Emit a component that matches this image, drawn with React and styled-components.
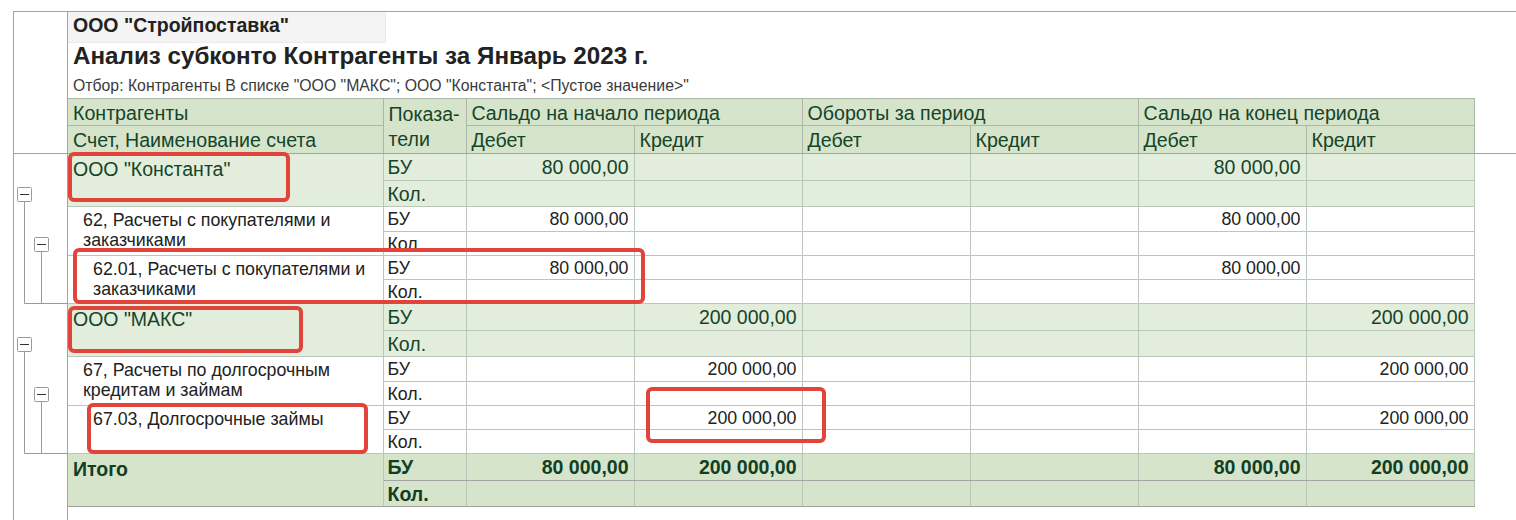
import React from "react";
import styled, { createGlobalStyle } from "styled-components";

const GlobalStyle = createGlobalStyle`
    * {
        box-sizing: border-box;
    }
    html, body {
        margin: 0;
        padding: 0;
        background: #ffffff;
        font-family: "Liberation Sans", Arial, sans-serif;
        overflow: hidden;
    }
`;

const COLS = [315, 83, 168, 168, 168, 168, 168, 168];

const rows = [
    { kind: "group", level: 0, name: 'ООО "Константа"', bu: ["80 000,00", "", "", "", "80 000,00", ""] },
    { kind: "detail", level: 1, name: "62, Расчеты с покупателями и заказчиками", bu: ["80 000,00", "", "", "", "80 000,00", ""] },
    { kind: "detail", level: 2, name: "62.01, Расчеты с покупателями и заказчиками", bu: ["80 000,00", "", "", "", "80 000,00", ""] },
    { kind: "group", level: 0, name: 'ООО "МАКС"', bu: ["", "200 000,00", "", "", "", "200 000,00"] },
    { kind: "detail", level: 1, name: "67, Расчеты по долгосрочным кредитам и займам", bu: ["", "200 000,00", "", "", "", "200 000,00"] },
    { kind: "detail", level: 2, name: "67.03, Долгосрочные займы", bu: ["", "200 000,00", "", "", "", "200 000,00"] },
    { kind: "total", level: 0, name: "Итого", bu: ["80 000,00", "200 000,00", "", "", "80 000,00", "200 000,00"] },
];

// red annotation frames drawn over the report
const marks = [
    { x: 68, y: 152, w: 222, h: 50 },
    { x: 73, y: 248, w: 572, h: 56 },
    { x: 68, y: 306, w: 235, h: 47 },
    { x: 87, y: 403, w: 281, h: 51 },
    { x: 646, y: 387, w: 180, h: 56 },
];

const heightsFor = (row) => {
    if (row.kind !== "detail") return [27, 26];
    return row.level === 1 ? [25, 24] : [24, 24];
};

const Cols = () => (
    <colgroup>
        {COLS.map((w, i) => (
            <col key={i} style={{ width: w }} />
        ))}
    </colgroup>
);

const TreeMarks = () => {
    const group = (top) => (
        <g key={top}>
            <line x1='10.5' y1={top + 14} x2='10.5' y2={top + 116.5} stroke='#9a9a9a' />
            <line x1='10.5' y1={top + 116.5} x2='53' y2={top + 116.5} stroke='#9a9a9a' />
            <line x1='27.5' y1={top + 64} x2='27.5' y2={top + 116.5} stroke='#9a9a9a' />
            <rect x='3.5' y={top + 0.5} width='14' height='14' fill='#fff' stroke='#9a9a9a' rx='1' />
            <line x1='6' y1={top + 7.5} x2='15' y2={top + 7.5} stroke='#333' />
            <rect x='20.5' y={top + 50.5} width='14' height='14' fill='#fff' stroke='#9a9a9a' rx='1' />
            <line x1='23' y1={top + 57.5} x2='32' y2={top + 57.5} stroke='#333' />
        </g>
    );
    return (
        <svg width='53' height='366' viewBox='0 0 53 366'>
            {group(33)}
            {group(183)}
        </svg>
    );
};

const App = () => {
    return (
        <Page>
            <GlobalStyle />
            <Frame>
                <HeadSection>
                    <Gutter />
                    <HeadContent>
                        <CompanyCell>ООО "Стройпоставка"</CompanyCell>
                        <ReportTitle>Анализ субконто Контрагенты за Январь 2023 г.</ReportTitle>
                        <FilterLine>Отбор: Контрагенты В списке "ООО "МАКС"; ООО "Константа"; &lt;Пустое значение&gt;"</FilterLine>
                        <HeaderTable>
                            <Cols />
                            <tbody>
                                <tr>
                                    <HeadCell>Контрагенты</HeadCell>
                                    <HeadCell rowSpan={2} $tall>
                                        Показа-
                                        <br />
                                        тели
                                    </HeadCell>
                                    <HeadCell colSpan={2}>Сальдо на начало периода</HeadCell>
                                    <HeadCell colSpan={2}>Обороты за период</HeadCell>
                                    <HeadCell colSpan={2}>Сальдо на конец периода</HeadCell>
                                </tr>
                                <tr>
                                    <HeadCell>Счет, Наименование счета</HeadCell>
                                    <HeadCell>Дебет</HeadCell>
                                    <HeadCell>Кредит</HeadCell>
                                    <HeadCell>Дебет</HeadCell>
                                    <HeadCell>Кредит</HeadCell>
                                    <HeadCell>Дебет</HeadCell>
                                    <HeadCell>Кредит</HeadCell>
                                </tr>
                            </tbody>
                        </HeaderTable>
                    </HeadContent>
                </HeadSection>
                <BodySection>
                    <Gutter>
                        <TreeMarks />
                    </Gutter>
                    <div>
                        <BodyTable>
                            <Cols />
                            <tbody>
                                {rows.map((row, i) => {
                                    const [h1, h2] = heightsFor(row);
                                    return (
                                        <React.Fragment key={i}>
                                            <Row $h={h1}>
                                                <NameCell rowSpan={2} $kind={row.kind} $level={row.level}>
                                                    {row.name}
                                                </NameCell>
                                                <Cell $kind={row.kind}>БУ</Cell>
                                                {row.bu.map((v, j) => (
                                                    <NumCell key={j} $kind={row.kind}>
                                                        {v}
                                                    </NumCell>
                                                ))}
                                            </Row>
                                            <Row $h={h2}>
                                                <Cell $kind={row.kind}>Кол.</Cell>
                                                {row.bu.map((v, j) => (
                                                    <NumCell key={j} $kind={row.kind} />
                                                ))}
                                            </Row>
                                        </React.Fragment>
                                    );
                                })}
                            </tbody>
                        </BodyTable>
                    </div>
                </BodySection>
            </Frame>
            {marks.map((m, i) => (
                <Mark key={i} $x={m.x} $y={m.y} $w={m.w} $h={m.h} />
            ))}
        </Page>
    );
};

export default App;

const Page = styled.div`
    position: relative;
    width: 1516px;
    height: 520px;
    padding: 11px 0 0 13px;
`;

const Frame = styled.div`
    display: flex;
    flex-direction: column;
    height: 100%;
    border-top: 1px solid #a3a3a3;
    border-left: 1px solid #a3a3a3;
`;

const HeadSection = styled.div`
    display: flex;
    border-bottom: 1px solid #a3a3a3;
`;

const BodySection = styled.div`
    display: flex;
    flex: 1;
`;

const Gutter = styled.div`
    width: 54px;
    flex-shrink: 0;
    border-right: 1px solid #a3a3a3;
    svg {
        display: block;
    }
`;

const HeadContent = styled.div`
    display: flex;
    flex-direction: column;
`;

const CompanyCell = styled.div`
    width: 318px;
    height: 31px;
    padding-left: 5px;
    background: #f4f4f4;
    border-right: 1px solid #ebebeb;
    border-bottom: 1px solid #ebebeb;
    font-size: 19.5px;
    font-weight: 700;
    line-height: 27px;
    color: #222;
`;

const ReportTitle = styled.div`
    height: 25px;
    padding-left: 5px;
    font-size: 24.2px;
    font-weight: 700;
    line-height: 25px;
    color: #222;
`;

const FilterLine = styled.div`
    margin: 9px 0 3px;
    padding-left: 5px;
    height: 18px;
    font-size: 15.8px;
    line-height: 18px;
    color: #3a3a3a;
    white-space: nowrap;
`;

const HeaderTable = styled.table`
    width: 1406px;
    table-layout: fixed;
    border-collapse: collapse;
    border-left: hidden;
    border-bottom: hidden;
`;

const HeadCell = styled.td`
    height: 27px;
    padding: 3px 4px 0 5px;
    vertical-align: top;
    background: #d7e4cc;
    border: 1px solid #aab6a6;
    font-size: 19.6px;
    line-height: ${(props) => (props.$tall ? 25 : 23)}px;
    color: #144528;
    white-space: nowrap;
    overflow: hidden;
`;

const BodyTable = styled.table`
    width: 1406px;
    table-layout: fixed;
    border-collapse: collapse;
    border-left: hidden;
    border-top: hidden;
`;

const Row = styled.tr`
    height: ${(props) => props.$h}px;
`;

const tone = {
    group: { bg: "#e3eddb", color: "#144528", size: 19.5, weight: 400 },
    total: { bg: "#d7e4cc", color: "#0f4023", size: 19.5, weight: 700 },
    detail: { bg: "#ffffff", color: "#222222", size: 17.8, weight: 400 },
};

const Cell = styled.td`
    padding: 0 4px 0 4px;
    vertical-align: middle;
    background: ${(props) => tone[props.$kind].bg};
    border: 1px solid #b9c6b9;
    border-bottom-color: ${(props) => (props.$kind === "total" ? "#a3a3a3" : "#b9c6b9")};
    color: ${(props) => tone[props.$kind].color};
    font-size: ${(props) => tone[props.$kind].size}px;
    font-weight: ${(props) => tone[props.$kind].weight};
    line-height: 20px;
    white-space: nowrap;
    overflow: hidden;
`;

const NumCell = styled(Cell)`
    text-align: right;
    padding-right: 5px;
`;

const NameCell = styled(Cell)`
    vertical-align: top;
    padding-top: ${(props) => (props.$kind === "detail" ? 3 : 4)}px;
    padding-left: ${(props) => 5 + props.$level * 10}px;
    white-space: normal;
    line-height: ${(props) => (props.$kind === "detail" ? 20 : 22)}px;
`;

const Mark = styled.div`
    position: absolute;
    left: ${(props) => props.$x}px;
    top: ${(props) => props.$y}px;
    width: ${(props) => props.$w}px;
    height: ${(props) => props.$h}px;
    border: 4px solid #e0443b;
    border-radius: 6px;
    pointer-events: none;
`;
